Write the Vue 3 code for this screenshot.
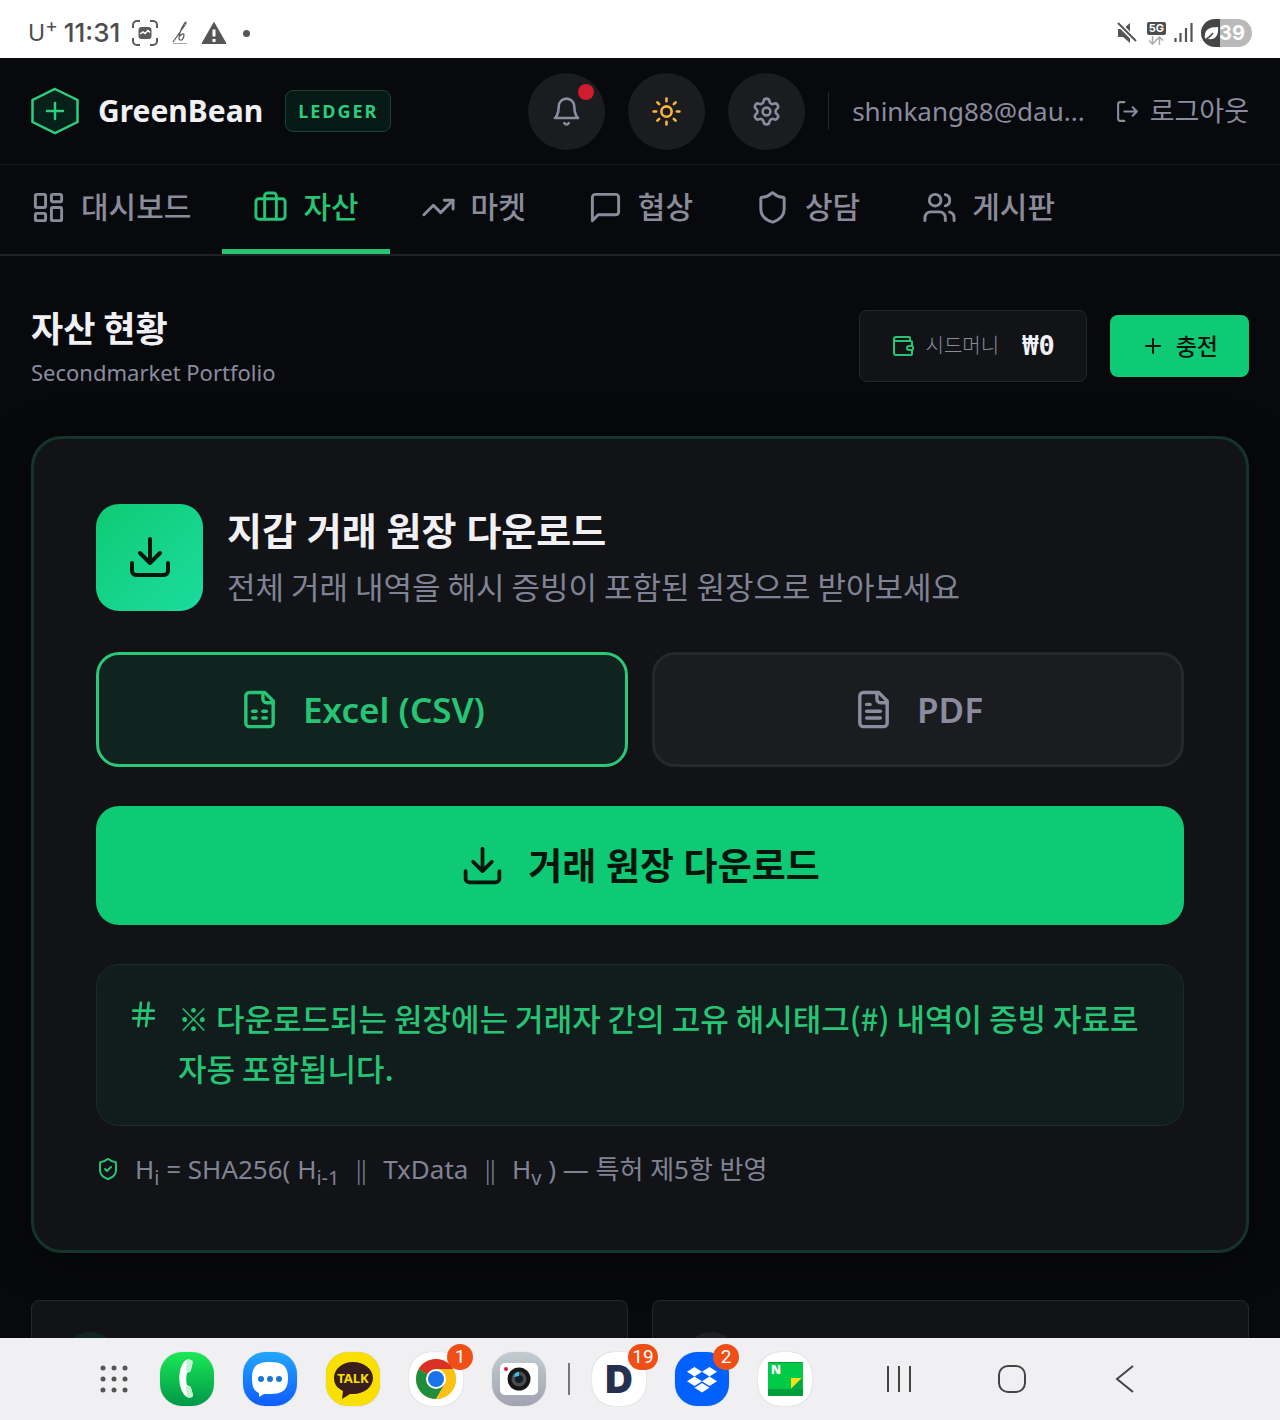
<script setup>
import { ref } from 'vue'

const tabs = [
  {
    id: 'dashboard',
    label: '대시보드',
    paths: [
      'M4 3h5a1 1 0 0 1 1 1v7a1 1 0 0 1-1 1H4a1 1 0 0 1-1-1V4a1 1 0 0 1 1-1z',
      'M15 3h5a1 1 0 0 1 1 1v3a1 1 0 0 1-1 1h-5a1 1 0 0 1-1-1V4a1 1 0 0 1 1-1z',
      'M15 12h5a1 1 0 0 1 1 1v7a1 1 0 0 1-1 1h-5a1 1 0 0 1-1-1v-7a1 1 0 0 1 1-1z',
      'M4 16h5a1 1 0 0 1 1 1v3a1 1 0 0 1-1 1H4a1 1 0 0 1-1-1v-3a1 1 0 0 1 1-1z'
    ]
  },
  {
    id: 'assets',
    label: '자산',
    paths: [
      'M16 20V4a2 2 0 0 0-2-2h-4a2 2 0 0 0-2 2v16',
      'M4 6h16a2 2 0 0 1 2 2v10a2 2 0 0 1-2 2H4a2 2 0 0 1-2-2V8a2 2 0 0 1 2-2z'
    ]
  },
  {
    id: 'market',
    label: '마켓',
    paths: ['M22 7l-8.5 8.5-5-5L2 17', 'M16 7h6v6']
  },
  {
    id: 'deal',
    label: '협상',
    paths: ['M21 15a2 2 0 0 1-2 2H7l-4 4V5a2 2 0 0 1 2-2h14a2 2 0 0 1 2 2z']
  },
  {
    id: 'consult',
    label: '상담',
    paths: [
      'M20 13c0 5-3.5 7.5-7.66 8.95a1 1 0 0 1-.67-.01C7.5 20.5 4 18 4 13V6a1 1 0 0 1 1-1c2 0 4.5-1.2 6.24-2.72a1.17 1.17 0 0 1 1.52 0C14.51 3.81 17 5 19 5a1 1 0 0 1 1 1z'
    ]
  },
  {
    id: 'board',
    label: '게시판',
    paths: [
      'M16 21v-2a4 4 0 0 0-4-4H6a4 4 0 0 0-4 4v2',
      'M13 7a4 4 0 1 1-8 0 4 4 0 0 1 8 0z',
      'M22 21v-2a4 4 0 0 0-3-3.87',
      'M16 3.13a4 4 0 0 1 0 7.75'
    ]
  }
]

const filePaths = ['M15 2H6a2 2 0 0 0-2 2v16a2 2 0 0 0 2 2h12a2 2 0 0 0 2-2V7Z', 'M14 2v4a2 2 0 0 0 2 2h4']
const formats = [
  { id: 'csv', label: 'Excel (CSV)', paths: [...filePaths, 'M8 13h2', 'M14 13h2', 'M8 17h2', 'M14 17h2'] },
  { id: 'pdf', label: 'PDF', paths: [...filePaths, 'M10 9H8', 'M16 13H8', 'M16 17H8'] }
]

const activeTab = ref('assets')
const format = ref('csv')
</script>

<template>
  <div class="screen">
    <!-- phone status bar -->
    <div class="status">
      <div class="status-left">
        <span class="carrier">U<sup>+</sup></span>
        <span class="clock">11:31</span>
        <svg class="st-capture" width="26" height="26" viewBox="0 0 26 26" fill="none" stroke="#5a5a5a" stroke-width="2">
          <path d="M1 8V5a4 4 0 0 1 4-4h3M18 1h3a4 4 0 0 1 4 4v3M25 18v3a4 4 0 0 1-4 4h-3M8 25H5a4 4 0 0 1-4-4v-3" />
          <rect x="6.5" y="7" width="13" height="12" rx="3" fill="#5a5a5a" stroke="none" />
          <path d="M8 14l3-2 2 1.500 3-3 2 2" stroke="#fff" stroke-width="1.500" />
        </svg>
        <svg width="17" height="24" viewBox="0 0 17 24" fill="none" stroke="#555" stroke-width="1.200">
          <path d="M1 21L13 4c2-3 1-4-1-1-3 5-5 11-5 15 2 3 5 0 5-4 0-2-3-1-5 2" />
          <path d="M1 22.500h14" stroke="#aaa" stroke-width="1" />
        </svg>
        <svg class="st-warn" width="26" height="24" viewBox="0 0 26 24">
          <path d="M13 1.500L25 22.500H1z" fill="#555" stroke="#555" stroke-linejoin="round" />
          <path d="M13 8.500v7M13 18v3" stroke="#fff" stroke-width="3" />
        </svg>
        <span class="st-dot"></span>
      </div>
      <div class="status-right">
        <svg width="20" height="22" viewBox="0 0 20 22">
          <path d="M1 7h5l7-6v20l-7-6H1z" fill="#555" />
          <path d="M1 1l19 19" stroke="#fff" stroke-width="5" />
          <path d="M1 1l18 18" stroke="#555" stroke-width="2" />
        </svg>
        <div class="net">
          <span>5G</span>
          <svg width="16" height="9" viewBox="0 0 16 9" fill="none" stroke="#aaa" stroke-width="1.500">
            <path d="M4.500 0v8M1 4.500l3.500 3.500 3.500-3.500M11.500 9V1M8 4.500L11.500 1 15 4.500" />
          </svg>
        </div>
        <svg width="19" height="20" viewBox="0 0 19 20" stroke="#555" stroke-width="2.200">
          <path d="M1.500 19v-4M6.500 19v-9M12 19V5M17.500 19V0" />
        </svg>
        <div class="battery">
          <svg width="18" height="28" viewBox="0 0 18 28">
            <path d="M4 20c-1-9 3-12 13-12 1 9-3 13-10 12l-3 1z" fill="#fff" />
            <path d="M3 21c3-1 6-3 9-7" stroke="#454545" stroke-width="1.500" fill="none" />
          </svg>
          <span>39</span>
        </div>
      </div>
    </div>

    <div class="page">
      <header class="topbar">
        <svg class="logo" width="48" height="48" viewBox="0 0 48 48" fill="#06211a" stroke="#2fcb7e" stroke-width="2.500">
          <path d="M24 2L46.500 13v22L24 46 1.500 35V13z" />
          <path d="M24 16v16M16 24h16" stroke-linecap="round" />
        </svg>
        <span class="brand">GreenBean</span>
        <span class="ledger">LEDGER</span>

        <div class="actions">
          <button class="round" aria-label="알림">
            <svg class="icon" width="31" height="31" viewBox="0 0 24 24">
              <path d="M6 8a6 6 0 0 1 12 0c0 7 3 9 3 9H3s3-2 3-9" />
              <path d="M10.300 21a1.940 1.940 0 0 0 3.400 0" />
            </svg>
            <i class="alert"></i>
          </button>
          <button class="round sun" aria-label="테마">
            <svg class="icon" width="31" height="31" viewBox="0 0 24 24">
              <circle cx="12" cy="12" r="4" />
              <path d="M12 2v2M12 20v2M4.930 4.930l1.410 1.410M17.660 17.660l1.410 1.410M2 12h2M20 12h2M6.340 17.660l-1.410 1.410M19.070 4.930l-1.410 1.410" />
            </svg>
          </button>
          <button class="round" aria-label="설정">
            <svg class="icon" width="31" height="31" viewBox="0 0 24 24">
              <path d="M9.671 4.136a2.340 2.340 0 0 1 4.659 0 2.340 2.340 0 0 0 3.319 1.915 2.340 2.340 0 0 1 2.330 4.033 2.340 2.340 0 0 0 0 3.831 2.340 2.340 0 0 1-2.330 4.033 2.340 2.340 0 0 0-3.319 1.915 2.340 2.340 0 0 1-4.659 0 2.340 2.340 0 0 0-3.320-1.915 2.340 2.340 0 0 1-2.330-4.033 2.340 2.340 0 0 0 0-3.831A2.340 2.340 0 0 1 6.350 6.051a2.340 2.340 0 0 0 3.319-1.915" />
              <circle cx="12" cy="12" r="3" />
            </svg>
          </button>
          <span class="divider"></span>
          <span class="email">shinkang88@dau...</span>
          <button class="logout">
            <svg class="icon" width="25" height="25" viewBox="0 0 24 24">
              <path d="M9 21H5a2 2 0 0 1-2-2V5a2 2 0 0 1 2-2h4M17 16l4-4-4-4M21 12H9" />
            </svg>
            로그아웃
          </button>
        </div>
      </header>

      <nav class="tabs">
        <button
          v-for="tab in tabs"
          :key="tab.id"
          :class="['tab', { active: tab.id === activeTab }]"
          @click="activeTab = tab.id"
        >
          <svg class="icon" width="35" height="35" viewBox="0 0 24 24">
            <path v-for="p in tab.paths" :key="p" :d="p" />
          </svg>
          {{ tab.label }}
        </button>
      </nav>

      <main class="content">
        <div class="heading">
          <div>
            <h1>자산 현황</h1>
            <p>Secondmarket Portfolio</p>
          </div>
          <div class="heading-right">
            <div class="seed">
              <svg class="icon" width="24" height="24" viewBox="0 0 24 24">
                <path d="M19 7V4a1 1 0 0 0-1-1H5a2 2 0 0 0 0 4h15a1 1 0 0 1 1 1v4h-3a2 2 0 0 0 0 4h3a1 1 0 0 0 1-1v-2a1 1 0 0 0-1-1" />
                <path d="M3 5v14a2 2 0 0 0 2 2h15a1 1 0 0 0 1-1v-4" />
              </svg>
              <span class="seed-label">시드머니</span>
              <strong>₩0</strong>
            </div>
            <button class="charge">
              <svg class="icon" width="24" height="24" viewBox="0 0 24 24">
                <path d="M5 12h14M12 5v14" />
              </svg>
              충전
            </button>
          </div>
        </div>

        <section class="card">
          <div class="card-head">
            <div class="tile">
              <svg class="icon" width="48" height="48" viewBox="0 0 24 24">
                <path d="M12 3v12M7 10l5 5 5-5M21 15v4a2 2 0 0 1-2 2H5a2 2 0 0 1-2-2v-4" />
              </svg>
            </div>
            <div>
              <h2>지갑 거래 원장 다운로드</h2>
              <p>전체 거래 내역을 해시 증빙이 포함된 원장으로 받아보세요</p>
            </div>
          </div>

          <div class="formats">
            <button
              v-for="f in formats"
              :key="f.id"
              :class="['format', { active: f.id === format }]"
              @click="format = f.id"
            >
              <svg class="icon" width="41" height="41" viewBox="0 0 24 24">
                <path v-for="p in f.paths" :key="p" :d="p" />
              </svg>
              {{ f.label }}
            </button>
          </div>

          <button class="download">
            <svg class="icon" width="45" height="45" viewBox="0 0 24 24">
              <path d="M12 3v12M7 10l5 5 5-5M21 15v4a2 2 0 0 1-2 2H5a2 2 0 0 1-2-2v-4" />
            </svg>
            거래 원장 다운로드
          </button>

          <div class="note">
            <svg class="icon" width="31" height="31" viewBox="0 0 24 24">
              <path d="M4 9h16M4 15h16M10 3L8 21M16 3l-2 18" />
            </svg>
            <p>※ 다운로드되는 원장에는 거래자 간의 고유 해시태그(#) 내역이 증빙 자료로 자동 포함됩니다.</p>
          </div>

          <div class="formula">
            <svg class="icon" width="24" height="24" viewBox="0 0 24 24">
              <path :d="tabs[4].paths[0]" />
              <path d="M9 12l2 2 4-4" />
            </svg>
            <span>H<sub>i</sub> = SHA256( H<sub>i-1</sub> <b>‖</b> TxData <b>‖</b> H<sub>v</sub> ) — 특허 제5항 반영</span>
          </div>
        </section>

        <div class="summary">
          <div class="summary-card"><span class="disc green"></span></div>
          <div class="summary-card"><span class="disc"></span></div>
        </div>
      </main>
    </div>

    <!-- phone task bar -->
    <div class="taskbar">
      <button class="apps" aria-label="앱">
        <svg width="28" height="28" viewBox="0 0 28 28" fill="#555">
          <template v-for="y in 3" :key="y">
            <circle v-for="x in 3" :key="x" :cx="x * 11 - 8" :cy="y * 11 - 8" r="2.500" />
          </template>
        </svg>
      </button>
      <div class="dock">
        <button class="app phone" aria-label="전화">
          <svg width="54" height="54" viewBox="0 0 54 54">
            <path d="M26 8c3-1 6 0 6 2l-1 8c0 2-3 2-4 3-1 4-1 8 0 12 1 1 4 1 4 3l2 7c0 3-4 3-6 2C17 39 17 14 26 8z" fill="#fff" />
            <path d="M27 8c3-1 6 0 6 2l-2 8c-1 2-4 2-5 1zM26 35c2-1 5-1 5 1l2 7c0 3-4 3-6 2z" fill="#c4f2d5" />
          </svg>
        </button>
        <button class="app message" aria-label="메시지">
          <svg width="54" height="54" viewBox="0 0 54 54">
            <path d="M27 10c13 0 18 4 18 16s-5 16-18 16h-6l-5 3v-4C11 39 9 35 9 26c0-12 5-16 18-16z" fill="#fff" />
            <g fill="#1b75d8"><circle cx="18" cy="27" r="3" /><circle cx="27" cy="27" r="3" /><circle cx="36" cy="27" r="3" /></g>
          </svg>
        </button>
        <button class="app talk" aria-label="카카오톡">
          <svg width="54" height="54" viewBox="0 0 54 54">
            <path d="M27 10c11 0 20 7 20 16s-9 16-20 16h-3l-8 5 1-8C11 36 8 32 8 26c0-9 8-16 19-16z" fill="#3a1d1d" />
            <text x="27" y="31" text-anchor="middle" fill="#f9e000" font-size="13" font-weight="700">TALK</text>
          </svg>
        </button>
        <button class="app" aria-label="Chrome">
          <svg width="54" height="54" viewBox="0 0 54 54">
            <circle cx="27" cy="27" r="20" fill="#fbc116" />
            <path d="M27 27L9.700 17a20 20 0 0 1 34.600 0z" fill="#da3025" />
            <path d="M27 27L9.700 17a20 20 0 0 0 17.300 30l8.700-15z" fill="#1e8e3e" />
            <path d="M27 17h17.300A20 20 0 0 1 27 47l8.700-15z" fill="#fbc116" />
            <circle cx="27" cy="27" r="10" fill="#fff" />
            <circle cx="27" cy="27" r="8" fill="#1a73e8" />
          </svg>
          <span class="count">1</span>
        </button>
        <button class="app camera" aria-label="카메라">
          <svg width="54" height="54" viewBox="0 0 54 54">
            <rect x="8" y="11" width="38" height="32" rx="5" fill="#fff" />
            <circle cx="27" cy="27" r="11.500" fill="#171717" />
            <circle cx="27" cy="27" r="7.500" fill="#4a4a4f" />
            <circle cx="27" cy="27" r="4" fill="#111e2d" />
            <path d="M22 25a5 5 0 0 1 5-5v4z" fill="#3fc0dc" />
            <circle cx="14" cy="17" r="2" fill="#d91f2d" />
          </svg>
        </button>
      </div>
      <span class="dock-line"></span>
      <div class="dock">
        <button class="app" aria-label="D">
          <span class="d-mark">D</span>
          <span class="count wide">19</span>
        </button>
        <button class="app dropbox" aria-label="Dropbox">
          <svg width="54" height="54" viewBox="0 0 54 54" fill="#fff">
            <path d="M19.500 15l7.500 4.700-7.500 4.800-7.500-4.800zM34.500 15l7.500 4.700-7.500 4.800-7.500-4.800zM19.500 24.500l7.500 4.700-7.500 4.800-7.500-4.800zM34.500 24.500l7.500 4.700-7.500 4.800-7.500-4.800zM27 31l7.500 4.700L27 40.500l-7.500-4.800z" />
          </svg>
          <span class="count">2</span>
        </button>
        <button class="app" aria-label="메모">
          <svg width="54" height="54" viewBox="0 0 54 54">
            <rect x="10" y="10" width="35" height="34" rx="1" fill="#009d3c" />
            <path d="M10 11h35v26H10z" fill="#00cb49" />
            <path d="M33 26h11L33 37z" fill="#f7e017" />
            <path d="M33 37l11-11v11z" fill="#00a841" />
            <text x="13" y="22" fill="#fff" font-size="12" font-weight="900">N</text>
          </svg>
        </button>
      </div>
      <div class="sysnav">
        <button aria-label="최근">
          <svg width="28" height="28" viewBox="0 0 28 28" fill="none" stroke="#444" stroke-width="2">
            <path d="M3 1v26M14 1v26M25 1v26" />
          </svg>
        </button>
        <button aria-label="홈">
          <svg width="28" height="28" viewBox="0 0 28 28" fill="none" stroke="#444" stroke-width="2">
            <rect x="1" y="1" width="26" height="26" rx="9" />
          </svg>
        </button>
        <button aria-label="뒤로">
          <svg width="28" height="28" viewBox="0 0 28 28" fill="none" stroke="#444" stroke-width="2">
            <path d="M22 1L6 14l16 13" />
          </svg>
        </button>
      </div>
    </div>
  </div>
</template>

<style>
body {
  margin: 0;
  background: #08090c;
}
</style>

<style scoped>
.screen {
  display: flex;
  flex-direction: column;
  height: 100vh;
  overflow: hidden;
  font-family: "Noto Sans", "Noto Sans CJK KR", sans-serif;
  color: #f1f1f5;
}

.screen * {
  box-sizing: border-box;
}

button {
  font-family: inherit;
  border: 0;
  margin: 0;
  padding: 0;
  background: none;
  color: inherit;
  cursor: pointer;
}

h1,
h2,
p {
  margin: 0;
}

svg {
  display: block;
  flex: none;
}

.icon {
  fill: none;
  stroke: currentColor;
  stroke-width: 2;
  stroke-linecap: round;
  stroke-linejoin: round;
}

/* status bar */
.status {
  display: flex;
  justify-content: space-between;
  align-items: center;
  flex: none;
  height: 58px;
  padding: 8px 28px 0;
  background: #fff;
  color: #4d4d4d;
  font-family: Inter, Roboto, sans-serif;
}

.status-left,
.status-right {
  display: flex;
  align-items: center;
}

.carrier {
  font-size: 23px;
  line-height: 28px;
}

.carrier sup {
  font-size: 19px;
  line-height: 0;
}

.clock {
  margin: 0 12px 0 6px;
  font-size: 26px;
  line-height: 28px;
  font-weight: 500;
}

.st-capture {
  margin-right: 14px;
}

.st-warn {
  margin: 0 16px 0 12px;
}

.st-dot {
  width: 7px;
  height: 7px;
  border-radius: 50%;
  background: #555;
}

.status-right {
  gap: 8px;
}

.status-right .net {
  display: flex;
  flex-direction: column;
  align-items: center;
  gap: 1px;
  margin-left: 2px;
}

.net span {
  padding: 0 2px;
  border-radius: 2px;
  background: #4d4d4d;
  color: #fff;
  font-size: 11px;
  line-height: 13px;
  font-weight: 700;
}

.battery {
  display: flex;
  align-items: center;
  width: 51px;
  height: 28px;
  border-radius: 14px;
  background: linear-gradient(90deg, #454545 38%, #b9b9b9 38%);
  color: #fff;
  font-size: 20px;
  font-weight: 700;
}

/* app header */
.page {
  display: flex;
  flex-direction: column;
  flex: 1;
  min-height: 0;
  overflow: hidden;
  background: #08090c;
}

.topbar {
  display: flex;
  align-items: center;
  flex: none;
  height: 107px;
  padding: 0 31px;
  border-bottom: 1px solid #191b1f;
}

.brand {
  margin: 0 22px 0 19px;
  font-size: 30px;
  line-height: 40px;
  font-weight: 700;
}

.ledger {
  padding: 0 12px;
  border: 1px solid #13482f;
  border-radius: 8px;
  background: #071a15;
  color: #2fcb7e;
  font-size: 18px;
  line-height: 40px;
  font-weight: 700;
  letter-spacing: 2px;
}

.actions {
  display: flex;
  align-items: center;
  margin-left: auto;
  color: #8b8c9f;
}

.round {
  position: relative;
  display: flex;
  align-items: center;
  justify-content: center;
  width: 77px;
  height: 77px;
  margin-right: 23px;
  border-radius: 50%;
  background: #1b1c20;
}

.round.sun {
  color: #fdb53c;
}

.alert {
  position: absolute;
  top: 11px;
  right: 11px;
  width: 16px;
  height: 16px;
  border-radius: 50%;
  background: #d01c2c;
}

.divider {
  width: 1px;
  height: 38px;
  background: #25272c;
}

.email {
  margin: 0 30px 0 23px;
  font-size: 26px;
  line-height: 38px;
}

.logout {
  display: flex;
  align-items: center;
  gap: 10px;
  font-size: 27px;
  line-height: 38px;
}

/* tabs */
.tabs {
  display: flex;
  flex: none;
  height: 91px;
  border-bottom: 2px solid #1f2125;
}

.tab {
  display: flex;
  align-items: center;
  gap: 15px;
  padding: 0 31px;
  border-top: 0;
  border-bottom: 5px solid transparent;
  color: #8b8c9b;
  font-size: 30px;
  line-height: 40px;
  font-weight: 500;
}

.tab.active {
  border-bottom-color: #27c475;
  color: #27c475;
}

/* content */
.content {
  padding: 47px 31px 0;
}

.heading {
  display: flex;
  justify-content: space-between;
  align-items: center;
  margin-bottom: 47px;
}

.heading h1 {
  font-family: "Noto Sans CJK KR", sans-serif;
  font-size: 35px;
  line-height: 48px;
  font-weight: 700;
}

.heading p {
  margin-top: 4px;
  color: #8b8c9f;
  font-size: 22px;
  line-height: 34px;
}

.heading-right {
  display: flex;
  align-items: center;
  gap: 23px;
}

.seed {
  display: flex;
  align-items: center;
  height: 72px;
  padding: 0 31px;
  border: 1px solid #25272c;
  border-radius: 8px;
  background: #111317;
}

.seed .icon {
  color: #27c475;
}

.seed-label {
  margin: 0 23px 0 11px;
  color: #8b8c9f;
  font-size: 20px;
  line-height: 30px;
  font-weight: 300;
}

.seed strong {
  font-family: "DejaVu Sans Mono", monospace;
  font-size: 27px;
  line-height: 38px;
}

.charge {
  display: flex;
  align-items: center;
  gap: 11px;
  height: 62px;
  padding: 0 31px;
  border-radius: 8px;
  background: #0fca74;
  color: #03150c;
  font-size: 23px;
  line-height: 34px;
  font-weight: 500;
}

.card {
  display: flex;
  flex-direction: column;
  gap: 39px;
  padding: 62px;
  border: 3px solid #15352a;
  border-radius: 31px;
  background: #111317;
  box-shadow: 0 8px 46px rgba(0, 0, 0, 0.4);
}

.card-head {
  display: flex;
  align-items: center;
  gap: 24px;
}

.tile {
  display: flex;
  align-items: center;
  justify-content: center;
  width: 107px;
  height: 107px;
  border-radius: 23px;
  background: linear-gradient(135deg, #0fca74, #1bdc9e);
  color: #03150c;
}

.card-head h2 {
  font-size: 38px;
  line-height: 58px;
  font-weight: 700;
}

.card-head p {
  font-family: "Noto Sans CJK KR", sans-serif;
  color: #818395;
  font-size: 31px;
  line-height: 54px;
}

.formats {
  display: grid;
  grid-template-columns: 1fr 1fr;
  gap: 24px;
}

.format {
  display: flex;
  align-items: center;
  justify-content: center;
  gap: 23px;
  height: 115px;
  border: 3px solid #25282d;
  border-radius: 23px;
  background: #1b1c20;
  color: #8b8c9f;
  font-size: 35px;
  line-height: 46px;
  font-weight: 600;
}

.format.active {
  border-color: #2bc878;
  background: #10231f;
  color: #27c475;
}

.download {
  display: flex;
  align-items: center;
  justify-content: center;
  gap: 23px;
  height: 119px;
  border-radius: 23px;
  background: #0fca74;
  color: #03150c;
  font-size: 37px;
  line-height: 46px;
  font-weight: 700;
}

.note {
  display: flex;
  align-items: flex-start;
  gap: 19px;
  padding: 28px 31px 32px;
  border: 1px solid #15302a;
  border-radius: 23px;
  background: #111c1c;
  color: #27c475;
}

.note .icon {
  margin-top: 6px;
}

.note p {
  font-family: "Noto Sans CJK KR", sans-serif;
  font-size: 31px;
  line-height: 50px;
  font-weight: 500;
  word-break: keep-all;
}

.formula {
  display: flex;
  align-items: center;
  gap: 15px;
  margin-top: -15px;
  color: #818395;
  font-size: 26px;
  line-height: 38px;
}

.formula .icon {
  color: #27c475;
}

.formula b {
  margin: 0 8px;
  font-weight: 300;
}

.formula sub {
  font-size: 20px;
  line-height: 0;
}

.summary {
  display: grid;
  grid-template-columns: 1fr 1fr;
  gap: 24px;
  margin-top: 47px;
}

.summary-card {
  height: 200px;
  padding: 31px;
  border: 1px solid #25272c;
  border-radius: 8px;
  background: #111317;
}

.disc {
  display: block;
  width: 54px;
  height: 54px;
  border-radius: 50%;
  background: #1f2024;
}

.disc.green {
  background: #112620;
}

/* task bar */
.taskbar {
  display: flex;
  align-items: center;
  flex: none;
  height: 82px;
  padding: 0 99px 0 100px;
  background: #f0f0f3;
}

.apps {
  margin-right: 32px;
}

.dock {
  display: flex;
  gap: 29px;
}

.dock-line {
  width: 2px;
  height: 32px;
  margin: 0 22px;
  background: #777;
}

.app {
  position: relative;
  width: 54px;
  height: 54px;
  border-radius: 22px;
  background: #fff;
  box-shadow: 0 0 1px rgba(0, 0, 0, 0.3);
}

.app.phone {
  background: linear-gradient(#1be955, #009748);
}

.app.message {
  background: linear-gradient(#22a6fb, #0f5cff);
}

.app.talk {
  background: #f9e000;
}

.app.camera {
  background: linear-gradient(#c1ccd0, #a2a3b1);
}

.app.dropbox {
  background: #0061fe;
}

.d-mark {
  color: #263150;
  font-family: Inter, sans-serif;
  font-size: 38px;
  line-height: 54px;
  font-weight: 900;
}

.count {
  position: absolute;
  top: -8px;
  right: -10px;
  width: 26px;
  height: 26px;
  border-radius: 13px;
  background: #f04e17;
  color: #fff;
  font-family: Roboto, sans-serif;
  font-size: 19px;
  line-height: 26px;
  text-align: center;
}

.count.wide {
  right: -12px;
  width: 30px;
}

.sysnav {
  display: flex;
  margin-left: auto;
}

.sysnav button {
  display: flex;
  justify-content: center;
  width: 113px;
}
</style>
